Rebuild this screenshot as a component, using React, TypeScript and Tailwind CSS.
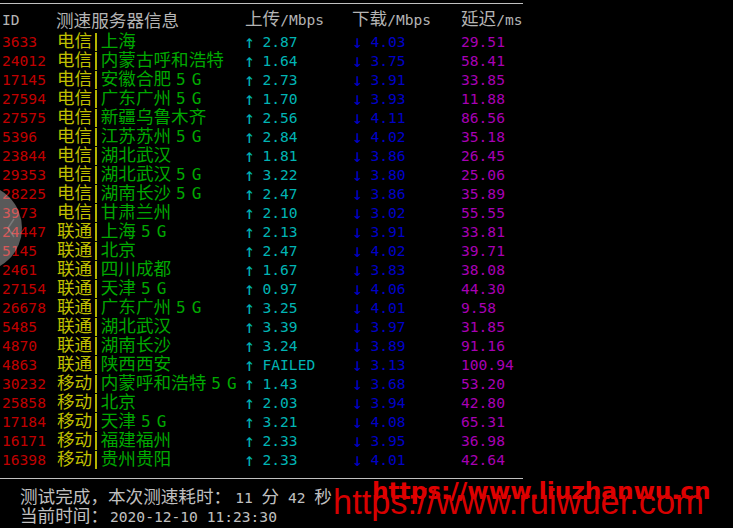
const rows: [string, string, string, string, string, string][] = [
  ['3633', '电信', '上海', '2.87', '4.03', '29.51'],
  ['24012', '电信', '内蒙古呼和浩特', '1.64', '3.75', '58.41'],
  ['17145', '电信', '安徽合肥 5 G', '2.73', '3.91', '33.85'],
  ['27594', '电信', '广东广州 5 G', '1.70', '3.93', '11.88'],
  ['27575', '电信', '新疆乌鲁木齐', '2.56', '4.11', '86.56'],
  ['5396', '电信', '江苏苏州 5 G', '2.84', '4.02', '35.18'],
  ['23844', '电信', '湖北武汉', '1.81', '3.86', '26.45'],
  ['29353', '电信', '湖北武汉 5 G', '3.22', '3.80', '25.06'],
  ['28225', '电信', '湖南长沙 5 G', '2.47', '3.86', '35.89'],
  ['3973', '电信', '甘肃兰州', '2.10', '3.02', '55.55'],
  ['24447', '联通', '上海 5 G', '2.13', '3.91', '33.81'],
  ['5145', '联通', '北京', '2.47', '4.02', '39.71'],
  ['2461', '联通', '四川成都', '1.67', '3.83', '38.08'],
  ['27154', '联通', '天津 5 G', '0.97', '4.06', '44.30'],
  ['26678', '联通', '广东广州 5 G', '3.25', '4.01', '9.58'],
  ['5485', '联通', '湖北武汉', '3.39', '3.97', '31.85'],
  ['4870', '联通', '湖南长沙', '3.24', '3.89', '91.16'],
  ['4863', '联通', '陕西西安', 'FAILED', '3.13', '100.94'],
  ['30232', '移动', '内蒙呼和浩特 5 G', '1.43', '3.68', '53.20'],
  ['25858', '移动', '北京', '2.03', '3.94', '42.80'],
  ['17184', '移动', '天津 5 G', '3.21', '4.08', '65.31'],
  ['16171', '移动', '福建福州', '2.33', '3.95', '36.98'],
  ['16398', '移动', '贵州贵阳', '2.33', '4.01', '42.64'],
];

const mono = "font-['DejaVu_Sans_Mono','Noto_Sans_CJK_SC',monospace]";
const cjk = 'text-[17.6px] leading-none';

function Arrow({ glyph }: { glyph: string }) {
  return <span className="inline-block w-[18.5px] text-[18px] leading-none">{glyph}</span>;
}

export default function App() {
  return (
    <div className={`relative w-[733px] h-[528px] overflow-hidden bg-black text-[14.6px] text-[#c0c0c0] ${mono}`}>
      <div className="flex flex-col w-[523px] pt-[3px]">
        <div className="h-px bg-[#c0c0c0]" />
        <div className="flex h-[27px] items-end pl-[2px] text-[#b4b4b4]">
          <span className="w-[54px]">ID</span>
          <span className={`w-[189px] ${cjk}`}>测速服务器信息</span>
          <span className="w-[107px]"><span className={cjk}>上传</span>/Mbps</span>
          <span className="w-[109px]"><span className={cjk}>下载</span>/Mbps</span>
          <span><span className={cjk}>延迟</span>/ms</span>
        </div>
        <div className="flex flex-col pt-[1px]">
          {rows.map((r) => (
            <div key={r[0]} className="flex h-[19px] items-center pl-[2px] whitespace-nowrap">
              <span className="w-[55px] text-[#c00000]">{r[0]}</span>
              <span className={`flex w-[187px] items-center ${cjk}`}>
                <span className="text-[#c0c000]">{r[1]}</span>
                <span className="ml-[3px] mr-[4px] h-[18px] w-[1.5px] bg-[#b4b400]" />
                <span className="text-[#00a800]">
                  {r[2].replace(' 5 G', '')}
                  {r[2].endsWith('5 G') && <span className="ml-[5px] text-[16px] [word-spacing:-3.5px]">5 G</span>}
                </span>
              </span>
              <span className="flex w-[108px] items-center text-[#00b4b4]"><Arrow glyph="↑" />{r[3]}</span>
              <span className="flex w-[109px] items-center text-[#0000c8]"><Arrow glyph="↓" />{r[4]}</span>
              <span className="text-[#a800b4]">{r[5]}</span>
            </div>
          ))}
        </div>
        <div className="mt-[9px] h-px bg-[#c0c0c0]" />
        <div className="flex flex-col pl-[20px] pt-[9px]">
          <div className="h-[19px] leading-[19px]">
            <span className="text-[17.6px]">测试完成，本次测速耗时：</span><span className="ml-[4px]">11</span> <span className="text-[17.6px]">分</span> 42 <span className="text-[17.6px]">秒</span>
          </div>
          <div className="h-[19px] leading-[19px]">
            <span className="text-[17.6px]">当前时间：</span><span className="ml-[2px]">2020-12-10 11:23:30</span>
          </div>
          <div className="mt-[3px] h-[19px] whitespace-nowrap pl-[50px] text-[17.6px] leading-[19px] text-[#00a800]">
            测试脚本运行结束感谢使用欢迎访问博客获取更多服务器信息
          </div>
        </div>
      </div>
      <div className="absolute left-[372px] top-[474px] whitespace-nowrap font-['DejaVu_Sans',sans-serif] text-[23.2px] font-bold text-[#e00000]">https://www.liuzhanwu.cn</div>
      <div className="absolute left-[333px] top-[477px] whitespace-nowrap font-['Liberation_Sans',sans-serif] text-[34.4px] text-[#d80000]">https://www.ruiwuer.com</div>
      <div className="absolute left-[-66px] top-[184px] flex h-[88px] w-[88px] items-center justify-end rounded-full bg-white/35 pr-[7px]">
        <svg width="8" height="20" viewBox="0 0 8 20" fill="none" stroke="#ffffff" strokeOpacity="0.2" strokeWidth="1.5">
          <path d="M7 1 1 10l6 9" />
        </svg>
      </div>
    </div>
  );
}
